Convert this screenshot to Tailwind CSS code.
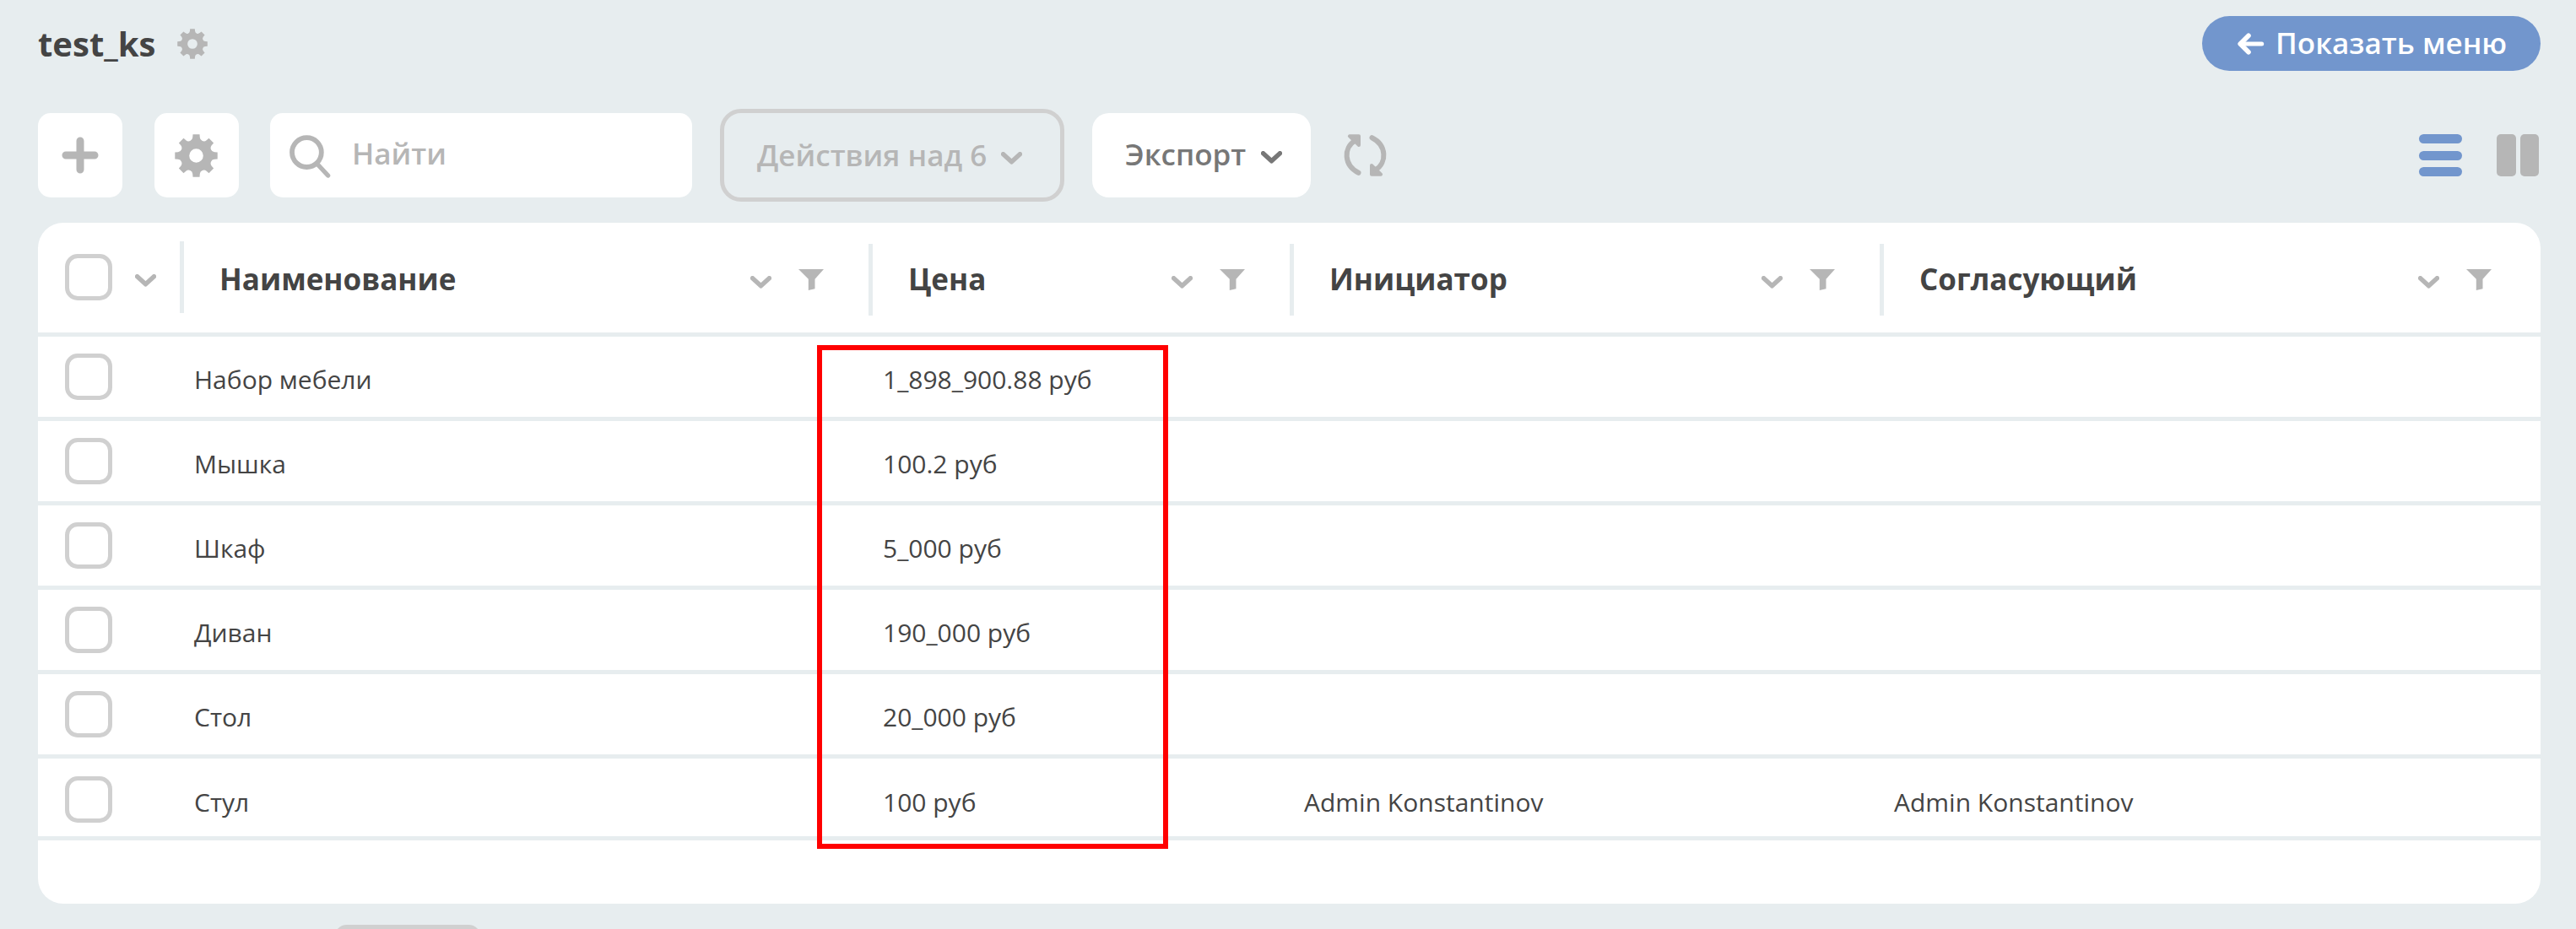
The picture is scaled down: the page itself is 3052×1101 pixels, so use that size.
<!DOCTYPE html>
<html lang="ru">
<head>
<meta charset="utf-8">
<title>test_ks</title>
<script src="https://cdn.jsdelivr.net/npm/@tailwindcss/browser@4"></script>
</head>
<body class="relative h-[1101px] w-[3052px] overflow-hidden bg-[#e7edef] font-['Open_Sans',sans-serif] text-[#444444]">
<svg class="hidden">
  <symbol id="gear" viewBox="-25.5 -25.5 51 51"><path fill-rule="evenodd" d="M-4-25.2H4L4.3-21.5A4.8 4.8 0 0 0 12.16-18.24L14.99-20.65L20.65-14.99L18.24-12.16A4.8 4.8 0 0 0 21.5-4.3L25.2-4V4L21.5 4.3A4.8 4.8 0 0 0 18.24 12.16L20.65 14.99L14.99 20.65L12.16 18.24A4.8 4.8 0 0 0 4.3 21.5L4 25.2H-4L-4.3 21.5A4.8 4.8 0 0 0-12.16 18.24L-14.99 20.65L-20.65 14.99L-18.24 12.16A4.8 4.8 0 0 0-21.5 4.3L-25.2 4V-4L-21.5-4.3A4.8 4.8 0 0 0-18.24-12.16L-20.65-14.99L-14.99-20.65L-12.16-18.24A4.8 4.8 0 0 0-4.3-21.5ZM0-8.3A8.3 8.3 0 1 0 0 8.3A8.3 8.3 0 1 0 0-8.3Z"/></symbol>
  <symbol id="chevron" viewBox="0 0 25 15"><path d="M2.6 2.7L12.5 11.8L22.4 2.7" fill="none" stroke="currentColor" stroke-width="5.4" stroke-linecap="round" stroke-linejoin="round"/></symbol>
  <symbol id="funnel" viewBox="0 0 30 25"><path d="M0 0H30L19.5 11.7V23.3L11.8 25V11.7Z"/></symbol>
</svg>

<header class="flex h-[134px] items-start justify-between pl-[45px] pr-[42px]">
  <div class="flex items-center gap-[26px] pt-[24px]">
    <h1 class="text-[40px] font-bold leading-[55px]">test_ks</h1>
    <svg class="h-[36px] w-[36px] fill-[#b6b6b6]"><use href="#gear"/></svg>
  </div>
  <button class="mt-[19px] flex h-[65px] w-[401px] items-center rounded-full bg-[#7296cd] pl-[42px] text-white">
    <svg class="h-[26px] w-[32px]" viewBox="0 0 32 26" fill="none" stroke="currentColor" stroke-width="5" stroke-linecap="round" stroke-linejoin="round"><path d="M3.5 13H28.7"/><path d="M13 3.2L3.2 13L13 22.8" stroke-width="5.6"/></svg>
    <span class="pb-[2px] pl-[13px] text-[35px] font-semibold leading-[48px]">Показать меню</span>
  </button>
</header>

<section class="flex h-[100px] items-center pl-[45px] pr-[44px]">
  <button class="flex size-[100px] items-center justify-center rounded-[15px] bg-white">
    <svg class="size-[44px]" viewBox="0 0 44 44" stroke="#b6b6b6" stroke-width="9" stroke-linecap="round"><path d="M22 5V39M5 22H39"/></svg>
  </button>
  <button class="ml-[38px] flex size-[100px] items-center justify-center rounded-[15px] bg-white pr-px">
    <svg class="size-[51px] fill-[#b6b6b6]"><use href="#gear"/></svg>
  </button>
  <div class="ml-[37px] flex h-[100px] w-[500px] items-center rounded-[15px] bg-white pl-[23px] text-[#b6b6b6]">
    <svg class="mt-[3px] h-[51px] w-[50px]" viewBox="0 0 50 51" fill="none" stroke="currentColor"><circle cx="20.4" cy="20.6" r="17.4" stroke-width="5.8"/><path d="M33.5 35L45.6 48" stroke-width="5.4" stroke-linecap="round"/></svg>
    <span class="pb-[5px] pl-[24px] text-[35px] font-semibold leading-[48px]">Найти</span>
  </div>
  <button class="ml-[33px] flex h-[110px] w-[408px] items-center rounded-[25px] border-5 border-[#d0d0d0] pl-[39px] text-[#b6b6b6]">
    <span class="w-[289px] whitespace-nowrap text-left text-[35px] font-semibold leading-[48px]">Действия над 6</span>
    <svg class="mt-[7px] h-[15px] w-[25px]"><use href="#chevron"/></svg>
  </button>
  <button class="ml-[33px] flex h-[100px] w-[259px] items-center rounded-[20px] bg-white pl-[39px] text-[#777777]">
    <span class="w-[161px] pb-[2px] text-left text-[35px] font-semibold leading-[48px]">Экспорт</span>
    <svg class="mt-[5px] h-[15px] w-[25px]"><use href="#chevron"/></svg>
  </button>
  <svg class="ml-[39px] h-[50px] w-[51px]" viewBox="0 0 51 50" fill="none" stroke="#b6b6b6" stroke-linecap="round" stroke-linejoin="round">
    <g id="half"><path d="M17.5 45.8C-.2 37-.2 16 13 8" stroke-width="6"/><path d="M6.9 2.3H18V13Z" fill="#b6b6b6" stroke-width="4"/></g>
    <use href="#half" transform="rotate(180 25.5 25)"/>
  </svg>
  <div class="ml-auto flex h-[50px] w-[51px] flex-col justify-between">
    <i class="h-[11px] rounded-full bg-[#7296cd]"></i><i class="h-[11px] rounded-full bg-[#7296cd]"></i><i class="h-[11px] rounded-full bg-[#7296cd]"></i>
  </div>
  <div class="ml-[41px] flex h-[50px] w-[50px] justify-between">
    <i class="w-[22.5px] rounded-[5px] bg-[#b6b6b6]"></i><i class="w-[22.5px] rounded-[5px] bg-[#b6b6b6]"></i>
  </div>
</section>

<main class="ml-[45px] mt-[30px] h-[807px] w-[2965px] overflow-hidden rounded-[30px] bg-white">
  <div class="grid h-[135px] grid-cols-[173px_816px_499px_699px_778px] border-b-5 border-[#e7edef] pt-[25px] text-[35px] font-bold leading-[48px]">
    <div class="-mt-[3px] flex h-[85px] border-r-5 border-[#e7edef] pl-[32px]">
      <span class="mt-[15px] h-[55px] w-[56px] rounded-[15px] border-5 border-[#d0d0d0]"></span>
      <svg class="ml-[27px] mt-[39px] h-[15px] w-[25px] text-[#b6b6b6]"><use href="#chevron"/></svg>
    </div>
    <div class="flex h-[85px] border-r-5 border-[#e7edef] pl-[42px] pr-[53px] pt-[18px]"><span class="grow">Наименование</span><svg class="mt-[20px] h-[15px] w-[25px] text-[#b6b6b6]"><use href="#chevron"/></svg><svg class="ml-[32px] mt-[12px] h-[25px] w-[30px] fill-[#b6b6b6]"><use href="#funnel"/></svg></div>
    <div class="flex h-[85px] border-r-5 border-[#e7edef] pl-[42px] pr-[53px] pt-[18px]"><span class="grow">Цена</span><svg class="mt-[20px] h-[15px] w-[25px] text-[#b6b6b6]"><use href="#chevron"/></svg><svg class="ml-[32px] mt-[12px] h-[25px] w-[30px] fill-[#b6b6b6]"><use href="#funnel"/></svg></div>
    <div class="flex h-[85px] border-r-5 border-[#e7edef] pl-[42px] pr-[53px] pt-[18px]"><span class="grow">Инициатор</span><svg class="mt-[20px] h-[15px] w-[25px] text-[#b6b6b6]"><use href="#chevron"/></svg><svg class="ml-[32px] mt-[12px] h-[25px] w-[30px] fill-[#b6b6b6]"><use href="#funnel"/></svg></div>
    <div class="flex h-[85px] pl-[42px] pr-[58px] pt-[18px]"><span class="grow">Согласующий</span><svg class="mt-[20px] h-[15px] w-[25px] text-[#b6b6b6]"><use href="#chevron"/></svg><svg class="ml-[32px] mt-[12px] h-[25px] w-[30px] fill-[#b6b6b6]"><use href="#funnel"/></svg></div>
  </div>
  <div class="text-[30px] leading-[42px] *:grid *:h-[100px] *:grid-cols-[185px_816px_499px_699px_766px] *:border-b-5 *:border-[#e7edef] *:pt-[30px]">
    <div><span class="-mt-[10px] ml-[32px] h-[55px] w-[56px] rounded-[15px] border-5 border-[#d0d0d0]"></span><span>Набор мебели</span><span>1_898_900.88 руб</span></div>
    <div><span class="-mt-[10px] ml-[32px] h-[55px] w-[56px] rounded-[15px] border-5 border-[#d0d0d0]"></span><span>Мышка</span><span>100.2 руб</span></div>
    <div><span class="-mt-[10px] ml-[32px] h-[55px] w-[56px] rounded-[15px] border-5 border-[#d0d0d0]"></span><span>Шкаф</span><span>5_000 руб</span></div>
    <div><span class="-mt-[10px] ml-[32px] h-[55px] w-[56px] rounded-[15px] border-5 border-[#d0d0d0]"></span><span>Диван</span><span>190_000 руб</span></div>
    <div><span class="-mt-[10px] ml-[32px] h-[55px] w-[56px] rounded-[15px] border-5 border-[#d0d0d0]"></span><span>Стол</span><span>20_000 руб</span></div>
    <div class="!h-[97px] !pt-[31px]"><span class="-mt-[10px] ml-[32px] h-[55px] w-[56px] rounded-[15px] border-5 border-[#d0d0d0]"></span><span>Стул</span><span>100 руб</span><span>Admin Konstantinov</span><span>Admin Konstantinov</span></div>
  </div>
</main>
<div class="ml-[396px] mt-[25px] h-[30px] w-[174px] rounded-[15px] bg-[#d0d0d0]"></div>

<!-- highlight over the price column -->
<div class="absolute left-[968px] top-[409px] h-[597px] w-[416px] border-6 border-[#ff0000]"></div>
</body>
</html>
